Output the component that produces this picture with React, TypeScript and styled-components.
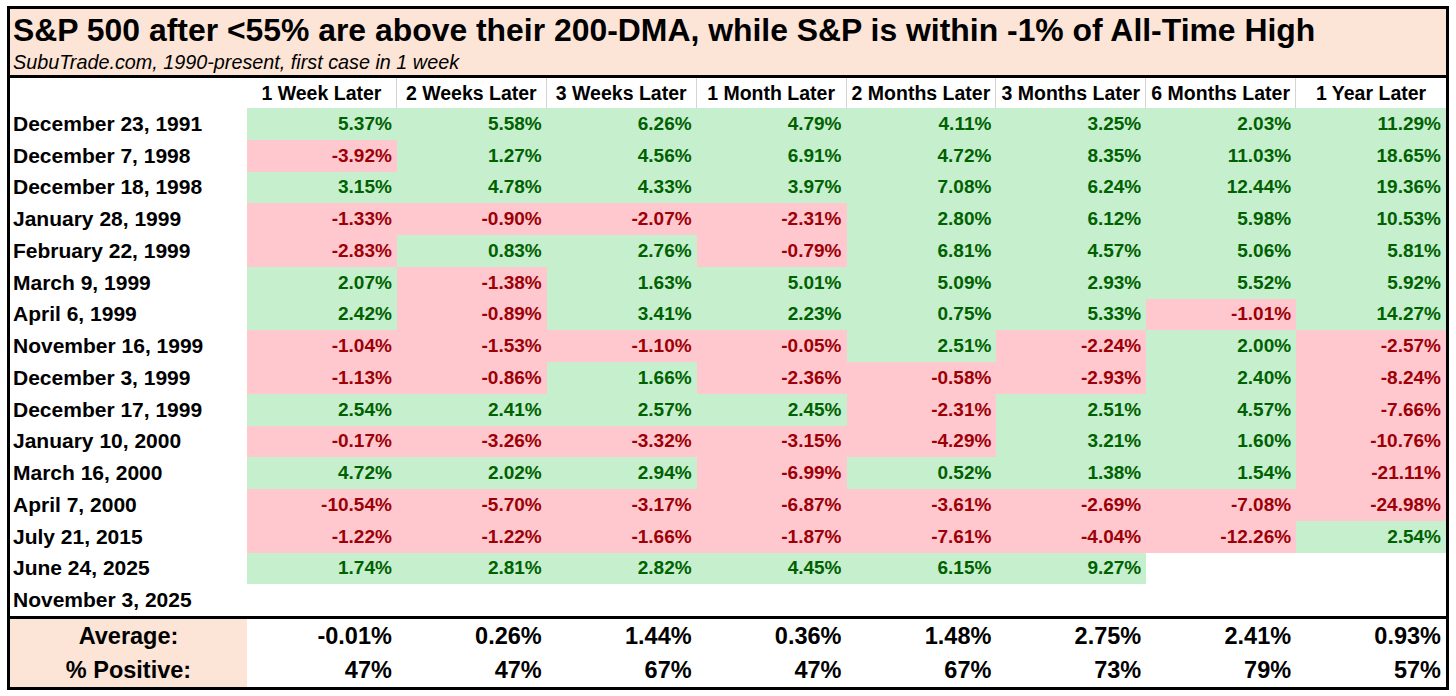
import React from "react";
import styled, { createGlobalStyle } from "styled-components";

// ---------------- Data ----------------
const columns = [
  "1 Week Later",
  "2 Weeks Later",
  "3 Weeks Later",
  "1 Month Later",
  "2 Months Later",
  "3 Months Later",
  "6 Months Later",
  "1 Year Later",
];

type Row = { date: string; values: (number | null)[] };

const rows: Row[] = [
  { date: "December 23, 1991", values: [5.37, 5.58, 6.26, 4.79, 4.11, 3.25, 2.03, 11.29] },
  { date: "December 7, 1998", values: [-3.92, 1.27, 4.56, 6.91, 4.72, 8.35, 11.03, 18.65] },
  { date: "December 18, 1998", values: [3.15, 4.78, 4.33, 3.97, 7.08, 6.24, 12.44, 19.36] },
  { date: "January 28, 1999", values: [-1.33, -0.9, -2.07, -2.31, 2.8, 6.12, 5.98, 10.53] },
  { date: "February 22, 1999", values: [-2.83, 0.83, 2.76, -0.79, 6.81, 4.57, 5.06, 5.81] },
  { date: "March 9, 1999", values: [2.07, -1.38, 1.63, 5.01, 5.09, 2.93, 5.52, 5.92] },
  { date: "April 6, 1999", values: [2.42, -0.89, 3.41, 2.23, 0.75, 5.33, -1.01, 14.27] },
  { date: "November 16, 1999", values: [-1.04, -1.53, -1.1, -0.05, 2.51, -2.24, 2.0, -2.57] },
  { date: "December 3, 1999", values: [-1.13, -0.86, 1.66, -2.36, -0.58, -2.93, 2.4, -8.24] },
  { date: "December 17, 1999", values: [2.54, 2.41, 2.57, 2.45, -2.31, 2.51, 4.57, -7.66] },
  { date: "January 10, 2000", values: [-0.17, -3.26, -3.32, -3.15, -4.29, 3.21, 1.6, -10.76] },
  { date: "March 16, 2000", values: [4.72, 2.02, 2.94, -6.99, 0.52, 1.38, 1.54, -21.11] },
  { date: "April 7, 2000", values: [-10.54, -5.7, -3.17, -6.87, -3.61, -2.69, -7.08, -24.98] },
  { date: "July 21, 2015", values: [-1.22, -1.22, -1.66, -1.87, -7.61, -4.04, -12.26, 2.54] },
  { date: "June 24, 2025", values: [1.74, 2.81, 2.82, 4.45, 6.15, 9.27, null, null] },
  { date: "November 3, 2025", values: [null, null, null, null, null, null, null, null] },
];

const averages = ["-0.01%", "0.26%", "1.44%", "0.36%", "1.48%", "2.75%", "2.41%", "0.93%"];
const positives = ["47%", "47%", "67%", "47%", "67%", "73%", "79%", "57%"];

type Tone = "up" | "down" | "none";

const toneOf = (v: number | null): Tone => (v === null ? "none" : v < 0 ? "down" : "up");

// ---------------- Component ----------------
const App: React.FC = () => {
  return (
    <>
      <GlobalStyle />
      <Frame>
        <TitleBox>
          <Title>S&amp;P 500 after &lt;55% are above their 200-DMA, while S&amp;P is within -1% of All-Time High</Title>
          <Subtitle>SubuTrade.com, 1990-present, first case in 1 week</Subtitle>
        </TitleBox>

        <Grid>
          <HeadCell $blank />
          {columns.map((c, i) => (
            <HeadCell key={c} $last={i === columns.length - 1}>
              {c}
            </HeadCell>
          ))}

          {rows.map((r) => (
            <React.Fragment key={r.date}>
              <DateCell>{r.date}</DateCell>
              {r.values.map((v, i) => (
                <ValueCell key={i} $tone={toneOf(v)}>
                  {v === null ? "" : `${v.toFixed(2)}%`}
                </ValueCell>
              ))}
            </React.Fragment>
          ))}
        </Grid>

        <Summary>
          <SummaryLabel>Average:</SummaryLabel>
          {averages.map((a, i) => (
            <SummaryValue key={i}>{a}</SummaryValue>
          ))}
          <SummaryLabel>% Positive:</SummaryLabel>
          {positives.map((p, i) => (
            <SummaryValue key={i}>{p}</SummaryValue>
          ))}
        </Summary>
      </Frame>
    </>
  );
};

// ---------------- Styled Components ----------------
const GlobalStyle = createGlobalStyle`
  html, body {
    margin: 0;
    padding: 0;
    background: #fff;
  }
  body {
    font-family: "Liberation Sans", Arial, sans-serif;
    color: #000;
  }
`;

const Frame = styled.div`
  box-sizing: border-box;
  margin: 6px 0 0 7px;
  width: 1442px;
  border: 3px solid #000;
  background: #fff;
`;

const TitleBox = styled.div`
  box-sizing: border-box;
  height: 69px;
  background: #fce4d6;
  border-bottom: 3px solid #000;
  padding: 3px 0 0 3px;
  display: flex;
  flex-direction: column;
`;

const Title = styled.h1`
  margin: 0;
  font-size: 31.9px;
  font-weight: 700;
  line-height: 36px;
  white-space: nowrap;
`;

const Subtitle = styled.div`
  font-size: 19.8px;
  font-style: italic;
  line-height: 22px;
  margin-top: 3px;
  white-space: nowrap;
`;

const Grid = styled.div`
  display: grid;
  grid-template-columns: 237px repeat(8, 1fr);
  grid-template-rows: 30px repeat(16, 31.75px);
`;

const HeadCell = styled.div<{ $blank?: boolean; $last?: boolean }>`
  display: flex;
  align-items: center;
  justify-content: center;
  font-size: 19.5px;
  font-weight: 700;
  white-space: nowrap;
  border-right: ${(p) => (p.$blank || p.$last ? "none" : "1px solid #d4d4d4")};
`;

const DateCell = styled.div`
  display: flex;
  align-items: center;
  padding-left: 3px;
  font-size: 21px;
  font-weight: 700;
  white-space: nowrap;
`;

const ValueCell = styled.div<{ $tone: Tone }>`
  display: flex;
  align-items: center;
  justify-content: flex-end;
  padding-right: 5px;
  font-size: 19px;
  font-weight: 700;
  background: ${(p) => (p.$tone === "up" ? "#c6efce" : p.$tone === "down" ? "#ffc7ce" : "#fff")};
  color: ${(p) => (p.$tone === "up" ? "#006100" : p.$tone === "down" ? "#9c0006" : "#000")};
`;

const Summary = styled.div`
  display: grid;
  grid-template-columns: 237px repeat(8, 1fr);
  grid-template-rows: repeat(2, 34px);
  border-top: 3px solid #000;
`;

const SummaryLabel = styled.div`
  display: flex;
  align-items: center;
  justify-content: center;
  background: #fce4d6;
  font-size: 23.5px;
  font-weight: 700;
  white-space: nowrap;
`;

const SummaryValue = styled.div`
  display: flex;
  align-items: center;
  justify-content: flex-end;
  padding-right: 5px;
  font-size: 23.5px;
  font-weight: 700;
`;

export default App;
